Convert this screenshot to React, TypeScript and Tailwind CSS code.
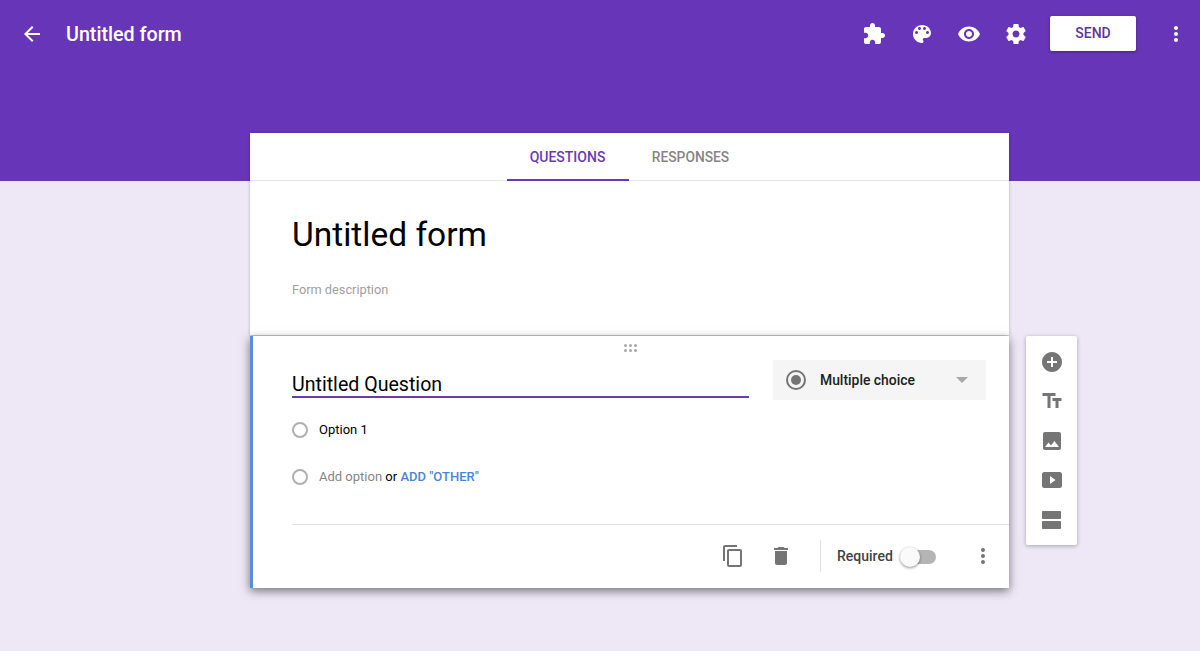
const paths = {
  back: "M20 11H7.83l5.59-5.59L12 4l-8 8 8 8 1.41-1.41L7.83 13H20v-2z",
  extension:
    "M20.5 11H19V7c0-1.1-.9-2-2-2h-4V3.5C13 2.12 11.88 1 10.5 1S8 2.12 8 3.5V5H4c-1.1 0-1.99.9-1.99 2v3.8H3.5c1.49 0 2.7 1.21 2.7 2.7s-1.21 2.7-2.7 2.7H2V20c0 1.1.9 2 2 2h3.8v-1.5c0-1.49 1.21-2.7 2.7-2.7 1.49 0 2.7 1.21 2.7 2.7V22H17c1.1 0 2-.9 2-2v-4h1.5c1.38 0 2.5-1.12 2.5-2.5S21.88 11 20.5 11z",
  palette:
    "M12 3c-4.97 0-9 4.03-9 9s4.03 9 9 9c.83 0 1.5-.67 1.5-1.5 0-.39-.15-.74-.39-1.01-.23-.26-.38-.61-.38-.99 0-.83.67-1.5 1.5-1.5H16c2.76 0 5-2.24 5-5 0-4.42-4.03-8-9-8zm-5.5 9c-.83 0-1.5-.67-1.5-1.5S5.67 9 6.5 9 8 9.67 8 10.5 7.33 12 6.5 12zm3-4C8.67 8 8 7.33 8 6.5S8.67 5 9.5 5s1.5.67 1.5 1.5S10.33 8 9.5 8zm5 0c-.83 0-1.5-.67-1.5-1.5S13.67 5 14.5 5s1.5.67 1.5 1.5S15.33 8 14.5 8zm3 4c-.83 0-1.5-.67-1.5-1.5S16.67 9 17.5 9s1.5.67 1.5 1.5-.67 1.5-1.5 1.5z",
  eye: "M12 4.5C7 4.5 2.73 7.61 1 12c1.73 4.39 6 7.5 11 7.5s9.27-3.11 11-7.5c-1.73-4.39-6-7.5-11-7.5zM12 17c-2.76 0-5-2.24-5-5s2.24-5 5-5 5 2.24 5 5-2.24 5-5 5zm0-8c-1.66 0-3 1.34-3 3s1.34 3 3 3 3-1.34 3-3-1.34-3-3-3z",
  settings:
    "M19.43 12.98c.04-.32.07-.64.07-.98s-.03-.66-.07-.98l2.11-1.65c.19-.15.24-.42.12-.64l-2-3.46c-.12-.22-.39-.3-.61-.22l-2.49 1c-.52-.4-1.08-.73-1.69-.98l-.38-2.65C14.46 2.18 14.25 2 14 2h-4c-.25 0-.46.18-.49.42l-.38 2.65c-.61.25-1.17.59-1.69.98l-2.49-1c-.23-.09-.49 0-.61.22l-2 3.46c-.13.22-.07.49.12.64l2.11 1.65c-.04.32-.07.65-.07.98s.03.66.07.98l-2.11 1.65c-.19.15-.24.42-.12.64l2 3.46c.12.22.39.3.61.22l2.49-1c.52.4 1.08.73 1.69.98l.38 2.65c.03.24.24.42.49.42h4c.25 0 .46-.18.49-.42l.38-2.65c.61-.25 1.17-.59 1.69-.98l2.49 1c.23.09.49 0 .61-.22l2-3.46c.12-.22.07-.49-.12-.64l-2.11-1.65zM12 15.5c-1.93 0-3.5-1.57-3.5-3.5s1.57-3.5 3.5-3.5 3.5 1.57 3.5 3.5-1.57 3.5-3.5 3.5z",
  more: "M12 8c1.1 0 2-.9 2-2s-.9-2-2-2-2 .9-2 2 .9 2 2 2zm0 2c-1.1 0-2 .9-2 2s.9 2 2 2 2-.9 2-2-.9-2-2-2zm0 6c-1.1 0-2 .9-2 2s.9 2 2 2 2-.9 2-2-.9-2-2-2z",
  add: "M12 2C6.48 2 2 6.48 2 12s4.48 10 10 10 10-4.48 10-10S17.52 2 12 2zm5 11h-4v4h-2v-4H7v-2h4V7h2v4h4v2z",
  title: "M2.5 4v3h5v12h3V7h5V4h-13zm19 5h-9v3h3v7h3v-7h3V9z",
  image:
    "M21 19V5c0-1.1-.9-2-2-2H5c-1.1 0-2 .9-2 2v14c0 1.1.9 2 2 2h14c1.1 0 2-.9 2-2zM8.5 13.5l2.5 3.01L14.5 12l4.5 6H5l3.5-4.5z",
  video:
    "M4.5 4h15A2.5 2.5 0 0 1 22 6.5v11a2.5 2.5 0 0 1-2.5 2.5h-15A2.5 2.5 0 0 1 2 17.5v-11A2.5 2.5 0 0 1 4.5 4zM10 8v8l5.5-4z",
  section:
    "M20 13H3c-.55 0-1 .45-1 1v6c0 .55.45 1 1 1h17c.55 0 1-.45 1-1v-6c0-.55-.45-1-1-1zm0-10H3c-.55 0-1 .45-1 1v6c0 .55.45 1 1 1h17c.55 0 1-.45 1-1V4c0-.55-.45-1-1-1z",
  copy: "M16 1H4c-1.1 0-2 .9-2 2v14h2V3h12V1zm3 4H8c-1.1 0-2 .9-2 2v14c0 1.1.9 2 2 2h11c1.1 0 2-.9 2-2V7c0-1.1-.9-2-2-2zm0 16H8V7h11v14z",
  trash: "M6 19c0 1.1.9 2 2 2h8c1.1 0 2-.9 2-2V7H6v12zM19 4h-3.5l-1-1h-5l-1 1H5v2h14V4z",
};

const Icon = ({ d, className }: { d: string; className: string }) => (
  <svg viewBox="0 0 24 24" fill="currentColor" fillRule="evenodd" className={className}>
    <path d={d} />
  </svg>
);

const Radio = () => <span className="w-[16px] h-[16px] rounded-full border-2 border-[#b0b0b0] shrink-0" />;

const App = () => (
  <div className="min-h-[651px] overflow-hidden bg-[#ede7f6] font-['Roboto',sans-serif]">
    {/* Purple band with the toolbar */}
    <header className="h-[181px] bg-[#6735b8] text-white">
      <div className="h-[67px] flex items-center pl-[20px]">
        <Icon d={paths.back} className="w-[24px] h-[24px]" />
        <h1 className="ml-[22px] pt-[2px] text-[19.7px] font-medium">Untitled form</h1>
        <div className="ml-auto flex items-center">
          <Icon d={paths.extension} className="w-[24px] h-[24px] mr-[24px]" />
          <Icon d={paths.palette} className="w-[24px] h-[24px] mr-[23px]" />
          <Icon d={paths.eye} className="w-[24px] h-[24px] mr-[23px]" />
          <Icon d={paths.settings} className="w-[24px] h-[24px] mr-[22px]" />
          <button className="w-[86px] h-[35px] rounded-[2px] bg-white text-[#5e35a0] text-[14px] font-medium shadow-[0_1px_3px_rgba(0,0,0,0.35)]">
            SEND
          </button>
          <Icon d={paths.more} className="w-[24px] h-[24px] ml-[28px] mr-[12px]" />
        </div>
      </div>
    </header>

    <main className="-mt-[48px] ml-[250px] flex items-start gap-[17px]">
      <div className="w-[759px] shrink-0">
        <div className="bg-white shadow-[0_1px_3px_rgba(0,0,0,0.25)]">
          <nav className="h-[48px] flex justify-center border-b border-[#e6e6e6]">
            <div className="w-[122px] h-[48px] pt-[3px] flex items-center justify-center text-[14px] font-medium text-[#673ab7] border-b-2 border-[#673ab7]">
              QUESTIONS
            </div>
            <div className="w-[124px] h-[47px] pt-[1px] flex items-center justify-center text-[13.8px] font-medium text-[#858585]">
              RESPONSES
            </div>
          </nav>
          <div className="h-[154px] pl-[42px] pt-[32px]">
            <h2 className="text-[33.5px] leading-[44px] text-black">Untitled form</h2>
            <p className="mt-[25px] text-[12.75px] leading-[16px] text-[#a0a0a0]">Form description</p>
          </div>
        </div>

        <section className="relative mt-px h-[252px] bg-white border-l-[3px] border-[#5a8ddb] shadow-[0_3px_9px_rgba(0,0,0,0.5)]">
          <div className="absolute left-[371px] top-[8px] grid grid-cols-3 gap-[2px]">
            {[0, 1, 2, 3, 4, 5].map((i) => (
              <span key={i} className="w-[3px] h-[3px] rounded-full bg-[#a8a8a8]" />
            ))}
          </div>

          <div className="pl-[39px] pt-[24px] flex items-start">
            <div className="w-[457px] h-[38px] border-b-2 border-[#673ab7] text-[19.6px] leading-[50px] text-black">
              Untitled Question
            </div>
            <div className="ml-[24px] w-[213px] h-[40px] bg-[#f5f5f5] flex items-center pl-[13px]">
              <span className="w-[20px] h-[20px] rounded-full border-2 border-[#757575] flex items-center justify-center">
                <span className="w-[10px] h-[10px] rounded-full bg-[#757575]" />
              </span>
              <span className="ml-[14px] text-[13.9px] font-medium text-[#212121]">Multiple choice</span>
              <span className="ml-[41px] w-0 h-0 border-x-[6px] border-x-transparent border-t-[6px] border-t-[#a8a8a8]" />
            </div>
          </div>

          <div className="pl-[39px] mt-[20px] flex items-center gap-[11px] h-[20px] text-[13px] text-black">
            <Radio />
            Option 1
          </div>
          <div className="pl-[39px] mt-[27px] flex items-center gap-[11px] h-[20px] text-[13px]">
            <Radio />
            <span>
              <span className="text-[#858585]">Add option</span>
              <span className="text-black"> or </span>
              <span className="font-medium text-[#4a86d0]">ADD "OTHER"</span>
            </span>
          </div>

          <div className="ml-[39px] mt-[37px] border-t border-[#e0e0e0] h-[64px] pb-[2px] flex items-center">
            <Icon d={paths.copy} className="ml-[429px] w-[24px] h-[24px] text-[#757575]" />
            <Icon d={paths.trash} className="ml-[24px] w-[24px] h-[24px] text-[#757575]" />
            <span className="ml-[27px] w-px h-[32px] bg-[#e0e0e0]" />
            <span className="ml-[16px] mt-[2px] text-[14px] font-medium text-[#424242]">Required</span>
            <span className="relative ml-[10px] mt-[2px] w-[33px] h-[14px] rounded-full bg-[#b5b5b5]">
              <span className="absolute -left-[3px] -top-[3px] w-[20px] h-[20px] rounded-full bg-[#fafafa] shadow-[0_1px_3px_rgba(0,0,0,0.45)]" />
            </span>
            <Icon d={paths.more} className="ml-[35px] w-[24px] h-[24px] text-[#757575]" />
          </div>
        </section>
      </div>

      <aside className="mt-[203px] w-[51px] h-[209px] bg-white rounded-[2px] shadow-[0_1px_4px_rgba(0,0,0,0.3)] flex flex-col items-center pt-[14px] gap-[15.4px] text-[#757575]">
        <Icon d={paths.add} className="w-[24px] h-[24px]" />
        <Icon d={paths.title} className="w-[24px] h-[24px]" />
        <Icon d={paths.image} className="w-[24px] h-[24px]" />
        <Icon d={paths.video} className="w-[24px] h-[24px]" />
        <Icon d={paths.section} className="w-[24px] h-[24px]" />
      </aside>
    </main>
  </div>
);

export default App;
